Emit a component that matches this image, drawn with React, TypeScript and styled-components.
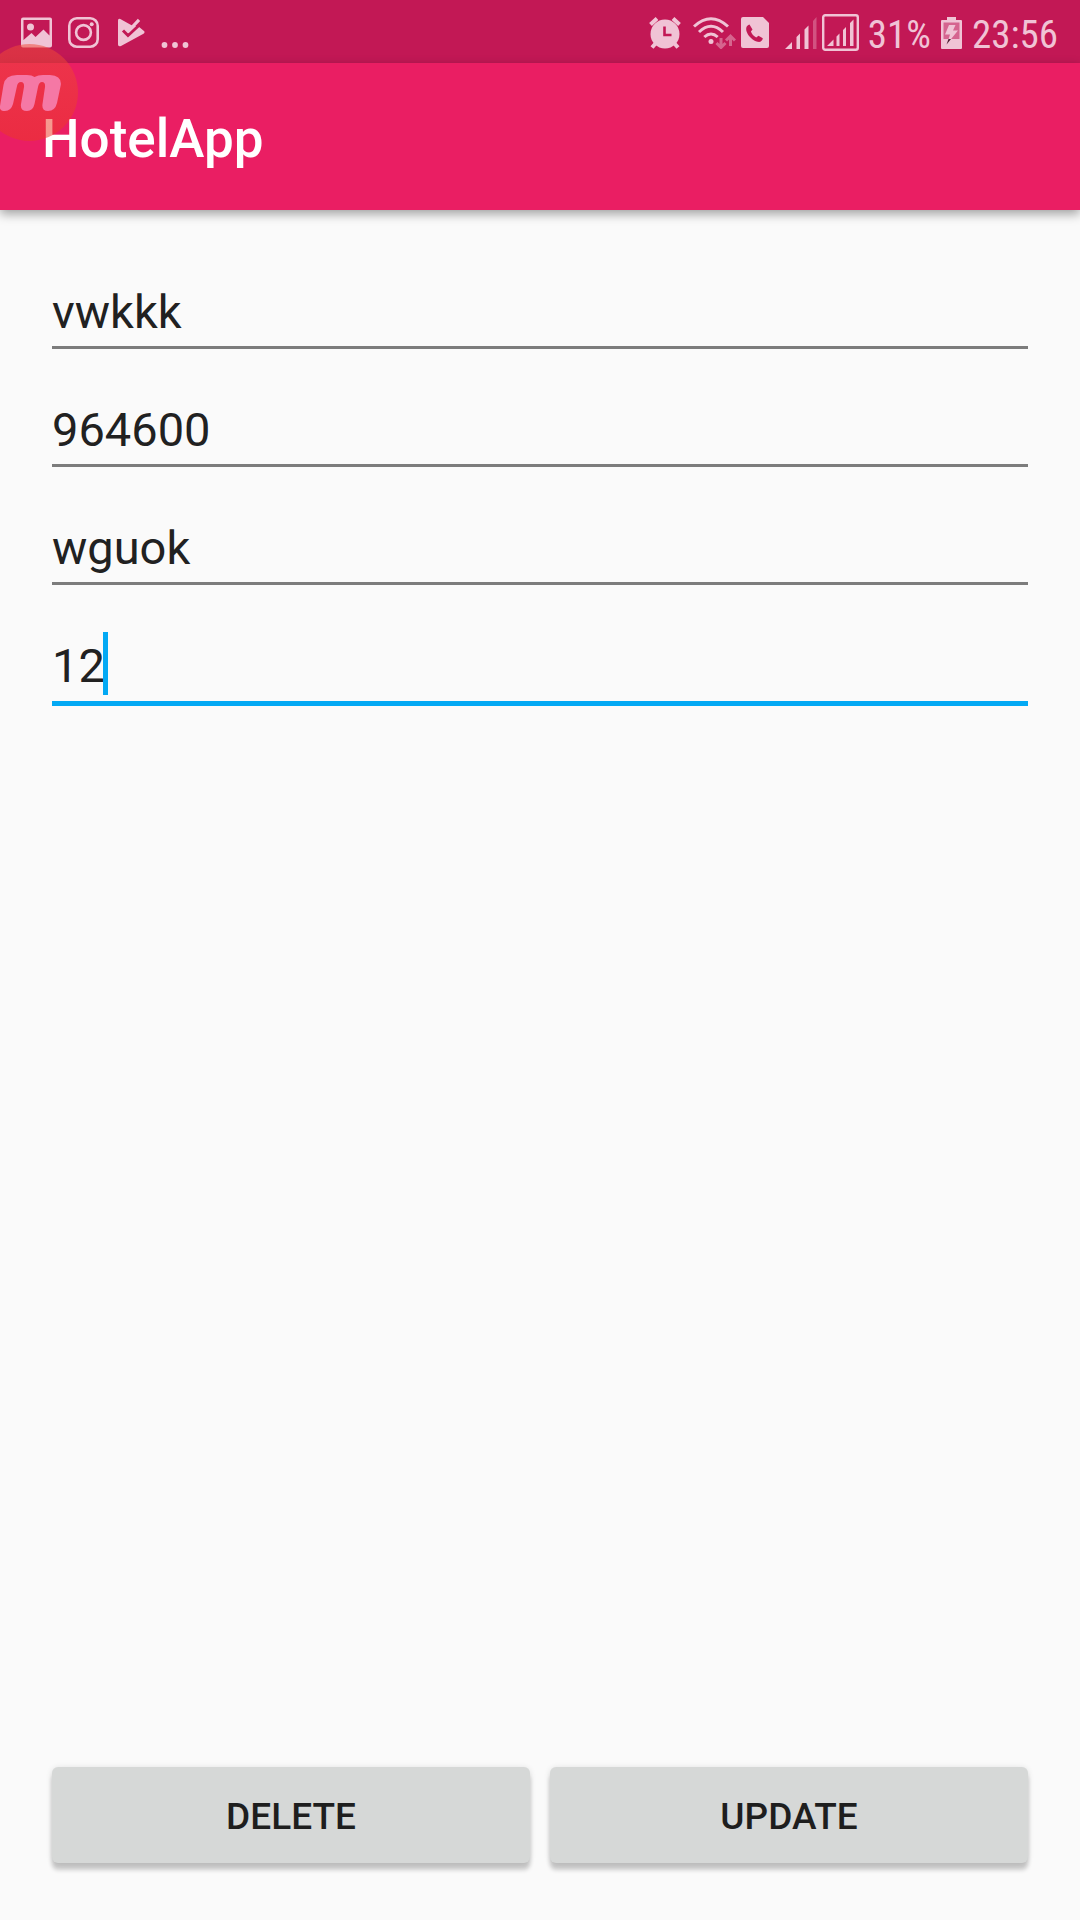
import React, { useState } from "react";
import styled, { createGlobalStyle } from "styled-components";

const GlobalStyle = createGlobalStyle`
  *, *::before, *::after { box-sizing: border-box; }
  body {
    margin: 0;
    background: #fafafa;
    font-family: Roboto, "Liberation Sans", sans-serif;
    color: #212121;
  }
`;

const Screen = styled.div`
  position: relative;
  display: flex;
  flex-direction: column;
  min-height: 100vh;
`;

const StatusBar = styled.header`
  display: flex;
  justify-content: space-between;
  align-items: center;
  height: 63px;
  padding: 2px 22px 0 21px;
  background: #c21855;
  color: #f0c3d5;
`;

const StatusGroup = styled.div<{ $gap: number }>`
  display: flex;
  align-items: center;
  gap: ${(p) => p.$gap}px;
`;

const StatusText = styled.span`
  padding-top: 4px;
  font-family: "Roboto Condensed", Roboto, sans-serif;
  font-size: 39px;
  line-height: 48px;
`;

const Glyph = styled.svg`
  display: block;
  flex: none;
`;

const AppBar = styled.div`
  display: flex;
  align-items: center;
  height: 147px;
  padding: 4px 42px 0;
  background: #ea1e63;
  box-shadow: 0 4px 10px rgba(0, 0, 0, 0.36);
`;

const Title = styled.h1`
  margin: 0;
  font-size: 53px;
  line-height: 64px;
  font-weight: 500;
  color: #fff;
`;

const Bubble = styled.div`
  position: absolute;
  top: 44px;
  left: -19px;
`;

const Form = styled.form`
  display: flex;
  flex: 1;
  flex-direction: column;
  padding: 29px 52px 57px;
`;

const Field = styled.div`
  position: relative;
  height: 118px;
  padding-top: 26px;
  font-size: 47px;
`;

const TextInput = styled.input<{ $active: boolean }>`
  display: block;
  width: 100%;
  height: ${(p) => (p.$active ? 87 : 84)}px;
  margin: 0;
  padding: 18px 0 ${(p) => (p.$active ? 8 : 7)}px;
  border: 0;
  border-bottom: ${(p) => (p.$active ? "5px solid #03a9f4" : "3px solid #7c7c7c")};
  border-radius: 0;
  outline: 0;
  background: transparent;
  color: inherit;
  caret-color: transparent;
  font-family: inherit;
  font-size: inherit;
`;

const Caret = styled.span<{ $column: number }>`
  position: absolute;
  top: 39px;
  left: ${(p) => p.$column}ch;
  width: 5px;
  height: 63px;
  margin-left: -2px;
  background: #03a9f4;
`;

const Actions = styled.div`
  display: flex;
  gap: 20px;
  margin-top: auto;
`;

const ActionButton = styled.button`
  flex: 1;
  height: 96px;
  padding: 2px 0 0;
  border: 0;
  border-radius: 6px;
  background: #d6d8d7;
  box-shadow: 0 7px 4px rgba(0, 0, 0, 0.19), 0 1px 6px rgba(0, 0, 0, 0.12);
  color: #1e1e1e;
  font-family: inherit;
  font-size: 37px;
  font-weight: 500;
  text-transform: uppercase;
`;

const PictureIcon = () => (
  <Glyph width="31" height="31" viewBox="0 0 31 31" fill="currentColor">
    <path
      fillRule="evenodd"
      d="M2 0.5h27a2 2 0 0 1 2 2v26a2 2 0 0 1-2 2H2a2 2 0 0 1-2-2v-26a2 2 0 0 1 2-2zM2.500 3v20L10.500 16l4 4L22.500 12.500l6 6V3z"
    />
    <circle cx="9.500" cy="10" r="3.500" />
  </Glyph>
);

const CameraIcon = () => (
  <Glyph width="31" height="31" viewBox="0 0 31 31" fill="none" stroke="currentColor" strokeWidth="2.6">
    <rect x="1.300" y="1.300" width="28.400" height="28.400" rx="7.500" />
    <circle cx="15.500" cy="15.500" r="7.400" />
    <circle cx="23.700" cy="7.300" r="2" fill="currentColor" stroke="none" />
  </Glyph>
);

const PlayCheckIcon = () => (
  <Glyph width="27" height="29" viewBox="0 0 27 29">
    <path
      d="M0 2.500Q0 0 2.300 1L14 7.500 20.500 8.500 26 13Q27.300 14.500 25.500 15.800L3 28Q0 29 0 26.500z"
      fill="currentColor"
    />
    <path d="M5 12.500l5 5L23 5.500" fill="none" stroke="#c21855" strokeWidth="3" />
    <path d="M7.500 9.500l3.200 3.300L21 1.800" fill="none" stroke="currentColor" strokeWidth="3.200" />
  </Glyph>
);

const MoreIcon = () => (
  <Glyph width="28" height="31" viewBox="0 0 28 31" fill="currentColor">
    <circle cx="3.500" cy="28" r="2.900" />
    <circle cx="14" cy="28" r="2.900" />
    <circle cx="24.500" cy="28" r="2.900" />
  </Glyph>
);

const AlarmIcon = () => (
  <Glyph width="32" height="32" viewBox="0 0 32 32">
    <g stroke="currentColor" strokeWidth="4">
      <path d="M1.500 7.500L8 1.500M24 1.500l6.500 6M7 26l-4 4.500M25 26l4 4.500" />
    </g>
    <circle cx="16" cy="17" r="14.500" fill="currentColor" />
    <path d="M15.500 9.500v8.500h7" fill="none" stroke="#c21855" strokeWidth="2.600" />
  </Glyph>
);

const WifiIcon = () => (
  <Glyph width="43" height="32" viewBox="0 0 43 32" fill="none" stroke="currentColor">
    <g strokeWidth="3">
      <path d="M1 9.500Q18 -6 35 9.500" />
      <path d="M6 15q12-11.500 24 0" />
      <path d="M11.300 20q6.700-6 13.400 0" />
    </g>
    <circle cx="18" cy="24.500" r="2.500" fill="currentColor" stroke="none" />
    <g opacity="0.45" strokeWidth="3">
      <path d="M28 21v9M23.500 26l4.500 4.500 4.500-4.500M37.500 29v-9M33 23.500l4.500-4.500 4.500 4.500" />
    </g>
  </Glyph>
);

const SimCallIcon = () => (
  <Glyph width="28" height="31" viewBox="0 0 28 31">
    <path d="M2 0h20l6 6v23a2 2 0 0 1-2 2H2a2 2 0 0 1-2-2V2a2 2 0 0 1 2-2z" fill="currentColor" />
    <path
      d="M8.500 7.500C5 8.500 4.500 12 6 15.500c2 4.500 6 8 10.500 9.300 3 .7 5-1 5.300-3.500l-4.300-2.500-2.300 1.800c-2.500-1.300-4.500-3.500-5.300-6l1.600-2z"
      fill="#c21855"
    />
  </Glyph>
);

const SignalIcon = () => (
  <Glyph width="32" height="32" viewBox="0 0 32 32" fill="currentColor">
    <path d="M0 32l7-7v7zM11.500 20l3.500-3.500V32h-3.500zM19.500 12.500L23.500 8.500V32h-4z" />
    <path d="M28 4l3.500-4v32H28z" opacity="0.35" />
  </Glyph>
);

const BoxedSignalIcon = () => (
  <Glyph width="37" height="37" viewBox="0 0 37 37" fill="currentColor">
    <rect x="1.200" y="1.200" width="34.600" height="34.600" rx="2" fill="none" stroke="currentColor" strokeWidth="2.400" />
    <path d="M5 32l6.500-6.500V32zM14.500 22.500l3-3V32h-3zM21 16l3-3V32h-3zM28 9l3.500-3.500V32H28z" />
  </Glyph>
);

const BatteryIcon = () => (
  <Glyph width="21" height="32" viewBox="0 0 21 32">
    <path d="M6 0h9v3h5a1 1 0 0 1 1 1v27a1 1 0 0 1-1 1H1a1 1 0 0 1-1-1V4a1 1 0 0 1 1-1h5z" fill="currentColor" />
    <path d="M2.500 5.500h16V22h-16z" fill="#d5648f" />
    <path d="M8 8h6.500l-2.500 5.500h5L6 27l3-9.500H4z" fill="currentColor" />
    <path d="M7.500 22H10l-4.500 5.500z" fill="#4a1c30" />
  </Glyph>
);

const RecorderBubble = () => (
  <Bubble aria-hidden="true">
    <Glyph width="98" height="98" viewBox="-19 44 98 98">
      <defs>
        <linearGradient id="bubble" x1="0" y1="0" x2="0" y2="1">
          <stop offset="0" stopColor="#f04a38" />
          <stop offset="1" stopColor="#ec3824" />
        </linearGradient>
      </defs>
      <circle cx="29.500" cy="92.500" r="48.500" fill="url(#bubble)" fillOpacity="0.52" />
      <path
        d="M0 106L3.500 85Q5 75 17 75H27Q32 75 34.500 77 38 75 43 75H50Q62 76 60.800 85L57 103Q55 111 48 111 41.500 111 42.500 104L45 87Q45.500 82 42 82 39 82 38 87L34.500 104Q33 111 27 111 20 111 21 104L24 87Q24.500 82 21 82 17.500 82 16.800 87L13 104Q11 111 5 111 -1 111 0 106z"
        fill="#f578a5"
      />
    </Glyph>
  </Bubble>
);

const FIELDS = [
  { name: "name", label: "Name", value: "vwkkk" },
  { name: "phone", label: "Phone", value: "964600" },
  { name: "address", label: "Address", value: "wguok" },
  { name: "room", label: "Room", value: "12" },
];

export default function App() {
  const [values, setValues] = useState(FIELDS.map((f) => f.value));
  const [active, setActive] = useState(3);

  const change = (index: number, text: string) =>
    setValues((old) => old.map((v, i) => (i === index ? text : v)));

  return (
    <Screen>
      <GlobalStyle />
      <StatusBar>
        <StatusGroup $gap={19}>
          <StatusGroup $gap={16}>
            <PictureIcon />
            <CameraIcon />
          </StatusGroup>
          <StatusGroup $gap={16}>
            <PlayCheckIcon />
            <MoreIcon />
          </StatusGroup>
        </StatusGroup>
        <StatusGroup $gap={16}>
          <StatusGroup $gap={12}>
            <AlarmIcon />
            <StatusGroup $gap={5}>
              <WifiIcon />
              <SimCallIcon />
            </StatusGroup>
          </StatusGroup>
          <StatusGroup $gap={9}>
            <StatusGroup $gap={5}>
              <SignalIcon />
              <BoxedSignalIcon />
            </StatusGroup>
            <StatusGroup $gap={10}>
              <StatusText>31%</StatusText>
              <BatteryIcon />
              <StatusText>23:56</StatusText>
            </StatusGroup>
          </StatusGroup>
        </StatusGroup>
      </StatusBar>
      <AppBar>
        <Title>HotelApp</Title>
      </AppBar>
      <RecorderBubble />
      <Form onSubmit={(e) => e.preventDefault()}>
        {FIELDS.map((field, i) => (
          <Field key={field.name}>
            <TextInput
              id={field.name}
              aria-label={field.label}
              value={values[i]}
              $active={i === active}
              onFocus={() => setActive(i)}
              onChange={(e) => change(i, e.target.value)}
            />
            {i === active && <Caret $column={values[i].length} />}
          </Field>
        ))}
        <Actions>
          <ActionButton type="button">Delete</ActionButton>
          <ActionButton type="submit">Update</ActionButton>
        </Actions>
      </Form>
    </Screen>
  );
}
